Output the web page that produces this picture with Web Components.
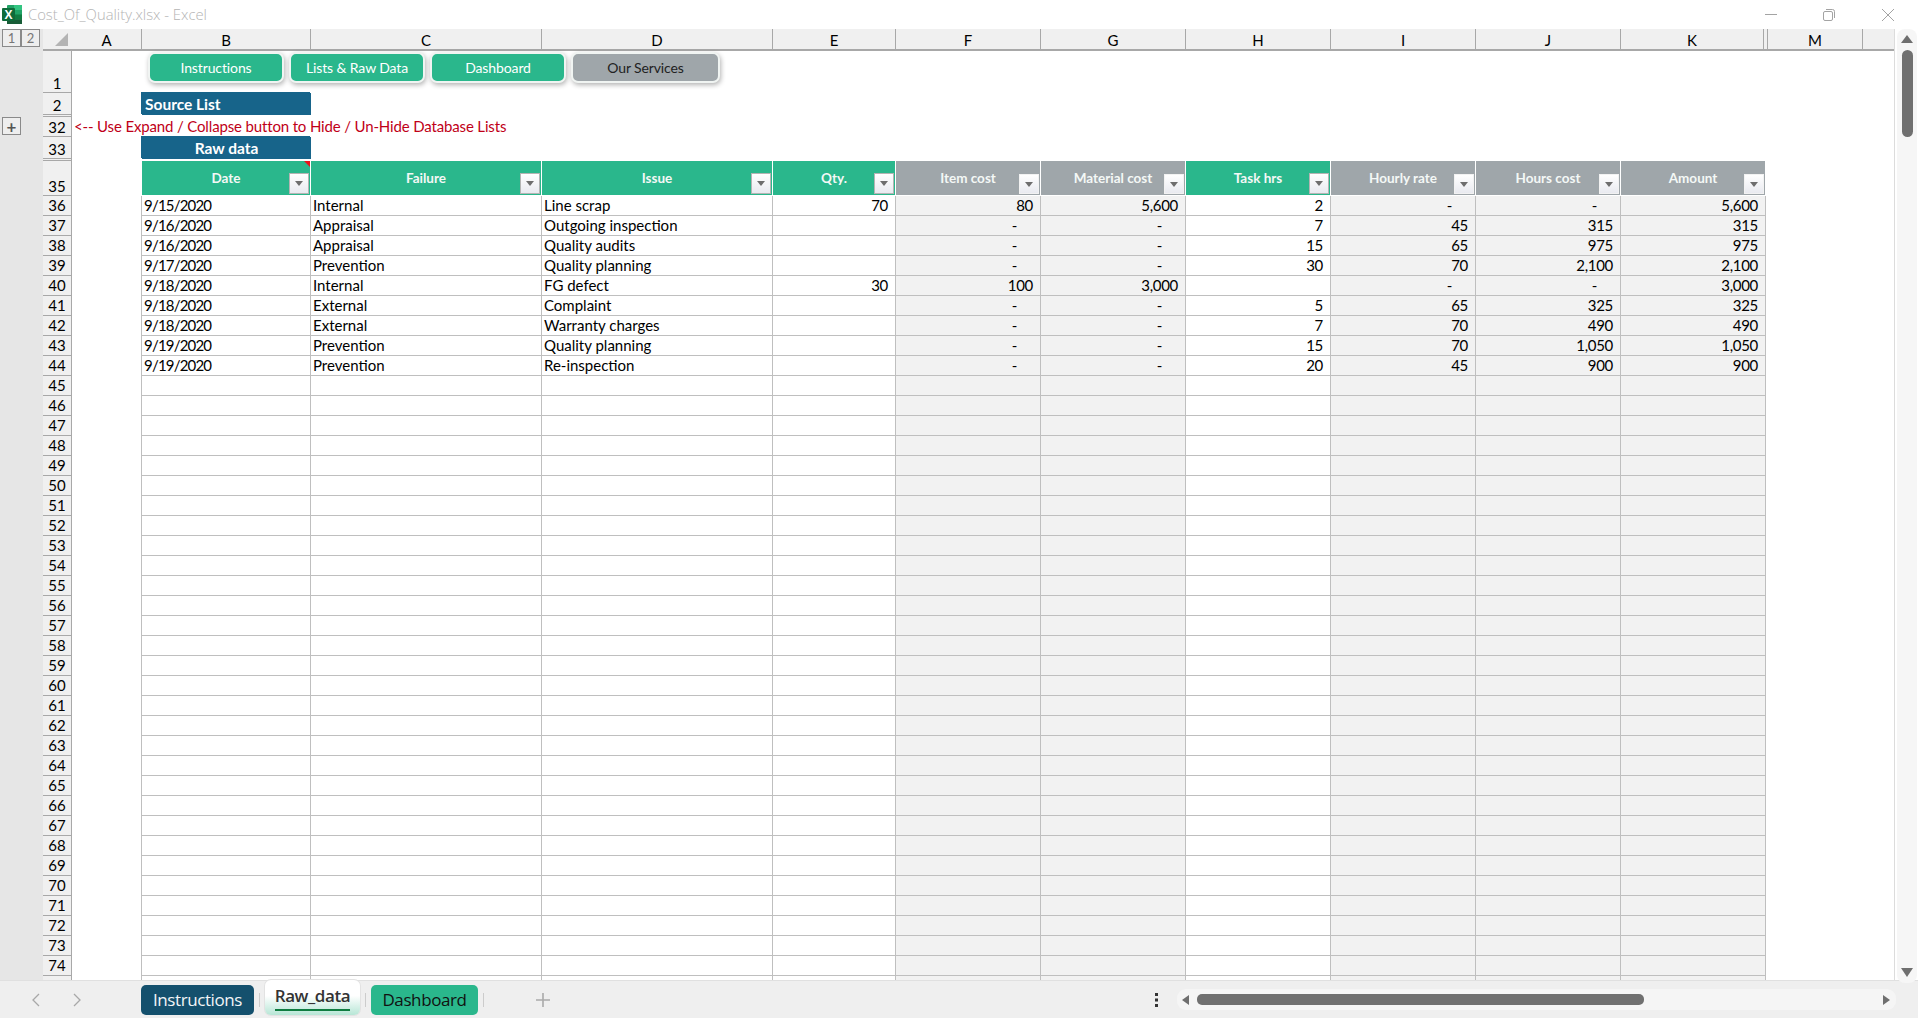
<!DOCTYPE html>
<html lang="en">
<head>
<meta charset="utf-8">
<title>Cost_Of_Quality.xlsx - Excel</title>
<style>
    html, body { margin: 0; height: 100%; overflow: hidden; background: #fff; font-family: Lato, "Liberation Sans", sans-serif; }
</style>
</head>
<body>
<excel-window>
    <excel-titlebar slot="title">Cost_Of_Quality.xlsx - Excel</excel-titlebar>
    <excel-outline slot="outline"></excel-outline>
    <excel-sheet slot="sheet">
        <nav-button>Instructions</nav-button>
        <nav-button>Lists &amp; Raw Data</nav-button>
        <nav-button>Dashboard</nav-button>
        <nav-button tone="grey">Our Services</nav-button>
    </excel-sheet>
    <excel-vscroll slot="vscroll"></excel-vscroll>
    <excel-tabbar slot="tabs">
        <sheet-tab tone="navy">Instructions</sheet-tab>
        <sheet-tab active>Raw_data</sheet-tab>
        <sheet-tab tone="green">Dashboard</sheet-tab>
    </excel-tabbar>
</excel-window>

<script>
// Page frame: title on top, gutter + sheet + scrollbar in the middle, tabs at the bottom
class ExcelWindow extends HTMLElement {
    constructor() {
        super();
        this.attachShadow({ mode: 'open' });
        this.shadowRoot.innerHTML = `
            <style>
                :host { display: flex; flex-direction: column; width: 1918px; height: 1018px; overflow: hidden; }
                .middle { display: flex; height: 951px; }
            </style>
            <slot name="title"></slot>
            <div class="middle">
                <slot name="outline"></slot>
                <slot name="sheet"></slot>
                <slot name="vscroll"></slot>
            </div>
            <slot name="tabs"></slot>
        `;
    }
}

class ExcelTitlebar extends HTMLElement {
    constructor() {
        super();
        this.attachShadow({ mode: 'open' });
        this.shadowRoot.innerHTML = `
            <style>
                :host { display: flex; align-items: center; height: 29px; background: #fff; padding: 0 24px 0 2px; flex: none; }
                .logo { width: 20px; height: 19px; flex: none; margin-top: -1px; }
                .name { margin: -2px 0 0 6px; font: 300 14.8px "Open Sans", sans-serif; color: #b4b4b4; flex: 1; }
                .controls { display: flex; gap: 46px; align-items: center; }
                svg.ctl { width: 12px; height: 12px; display: block; fill: none; stroke: #a3a3a3; stroke-width: 1; }
                svg.restore { margin-right: 1px; }
            </style>
            <svg class="logo" viewBox="0 0 20 19">
                <rect x="5" y="0" width="15" height="19" rx="1" fill="#21a366"/>
                <rect x="12" y="0" width="8" height="5" fill="#33c481"/>
                <rect x="12" y="9.5" width="8" height="5" fill="#107c41"/>
                <rect x="5" y="9.5" width="7" height="9.5" fill="#185c37"/>
                <rect x="12" y="14.5" width="8" height="4.5" fill="#185c37"/>
                <rect x="0" y="3" width="13" height="13" rx="1" fill="#0f6b3a"/>
                <text x="6.5" y="14" text-anchor="middle" font-family="'Liberation Sans'" font-weight="700" font-size="12" fill="#fff">X</text>
            </svg>
            <span class="name"><slot></slot></span>
            <div class="controls">
                <svg class="ctl" viewBox="0 0 12 12"><path d="M0 5.5H12"/></svg>
                <svg class="ctl restore" viewBox="0 0 12 12"><rect x=".5" y="2.5" width="9" height="9" rx="1.5"/><path d="M3 .5H9.5A2 2 0 0 1 11.5 2.5V9"/></svg>
                <svg class="ctl" viewBox="0 0 12 12"><path d="M0 0L12 12M12 0L0 12"/></svg>
            </div>
        `;
    }
}

// Grouping gutter on the far left (level buttons and the + box)
class ExcelOutline extends HTMLElement {
    constructor() {
        super();
        this.attachShadow({ mode: 'open' });
        this.shadowRoot.innerHTML = `
            <style>
                :host { display: block; width: 43px; flex: none; background: #e6e6e6; box-sizing: border-box; padding-left: 2px; }
                .levels { display: flex; }
                .box {
                    box-sizing: border-box; width: 19px; height: 18px; border: 1px solid #8a8a8a; background: #eee;
                    font: 13px Lato, sans-serif; color: #777; display: flex; align-items: center; justify-content: center;
                }
                .plus { margin-top: 70px; color: #555; font-size: 17px; line-height: 1; font-weight: 700; }
            </style>
            <div class="levels"><div class="box">1</div><div class="box">2</div></div>
            <div class="box plus">+</div>
        `;
    }
}

// Shape buttons floating in row 1
class NavButton extends HTMLElement {
    constructor() {
        super();
        this.attachShadow({ mode: 'open' });
        this.shadowRoot.innerHTML = `
            <style>
                :host {
                    display: flex; align-items: center; justify-content: center; box-sizing: border-box;
                    width: 136px; height: 31px; border: 2px solid #f0f4f2; border-radius: 7px; background: #2ab78c;
                    color: #fff; font: 14px Lato, sans-serif; letter-spacing: -.12px; box-shadow: 1px 2px 5px rgba(0,0,0,.3);
                }
                :host([tone="grey"]) { width: 149px; background: #9fa6aa; color: #222; }
            </style>
            <slot></slot>
        `;
    }
}

// Table header cell with the little filter arrow
class FilterHeader extends HTMLElement {
    constructor() {
        super();
        this.attachShadow({ mode: 'open' });
        this.shadowRoot.innerHTML = `
            <style>
                :host {
                    display: flex; position: relative; align-items: flex-start; justify-content: center; box-sizing: border-box;
                    background: #2ab78c; color: #f4f8f6; font: 700 13.5px Lato, sans-serif; padding-top: 9px;
                    border-right: 1px solid #fff; border-bottom: 1px solid #fff;
                }
                :host([tone="grey"]) { background: #9fa6aa; }
                .filter {
                    position: absolute; right: 1px; bottom: 1px; box-sizing: border-box; width: 20px; height: 21px;
                    background: linear-gradient(#fff, #e9eaf0); border: 1px solid #b4b4b4;
                    display: flex; align-items: center; justify-content: center;
                }
                :host([tone="grey"]) .filter { border-color: #f2f2f2; height: 20px; }
                .filter::after { content: ""; border: 4px solid transparent; border-top: 5px solid #6e6e6e; border-bottom: 0; }
                .note { position: absolute; top: 0; right: 0; border-top: 6px solid #e8121a; border-left: 6px solid transparent; display: none; }
                :host([note]) .note { display: block; }
            </style>
            <slot></slot>
            <span class="filter"></span>
            <span class="note"></span>
        `;
    }
}

// The worksheet itself, drawn as one CSS grid
const LETTERS = ['A', 'B', 'C', 'D', 'E', 'F', 'G', 'H', 'I', 'J', 'K', '', 'M'];
const HEADERS = [
    ['Date', ''], ['Failure', ''], ['Issue', ''], ['Qty.', ''], ['Item cost', 'grey'], ['Material cost', 'grey'],
    ['Task hrs', ''], ['Hourly rate', 'grey'], ['Hours cost', 'grey'], ['Amount', 'grey']
];
// date, failure, issue, qty, item, material, hrs, rate, hours cost, amount
const DATA = [
    ['9/15/2020', 'Internal', 'Line scrap', '70', '80', '5,600', '2', '-', '-', '5,600'],
    ['9/16/2020', 'Appraisal', 'Outgoing inspection', '', '-', '-', '7', '45', '315', '315'],
    ['9/16/2020', 'Appraisal', 'Quality audits', '', '-', '-', '15', '65', '975', '975'],
    ['9/17/2020', 'Prevention', 'Quality planning', '', '-', '-', '30', '70', '2,100', '2,100'],
    ['9/18/2020', 'Internal', 'FG defect', '30', '100', '3,000', '', '-', '-', '3,000'],
    ['9/18/2020', 'External', 'Complaint', '', '-', '-', '5', '65', '325', '325'],
    ['9/18/2020', 'External', 'Warranty charges', '', '-', '-', '7', '70', '490', '490'],
    ['9/19/2020', 'Prevention', 'Quality planning', '', '-', '-', '15', '70', '1,050', '1,050'],
    ['9/19/2020', 'Prevention', 'Re-inspection', '', '-', '-', '20', '45', '900', '900']
];
const GREY_COLS = [4, 5, 7, 8, 9];

class ExcelSheet extends HTMLElement {
    constructor() {
        super();
        this.attachShadow({ mode: 'open' });
    }

    connectedCallback() {
        this.render();
    }

    blanks(n) {
        return '<div></div>'.repeat(n);
    }

    dataCell(value, i) {
        if (i === 0) return `<div class="cell txt date">${value}</div>`;
        if (i < 3) return `<div class="cell txt">${value}</div>`;
        const grey = GREY_COLS.includes(i) ? ' grey' : '';
        const dash = value === '-' ? ' dash' : '';
        return `<div class="cell num${grey}${dash}">${value}</div>`;
    }

    render() {
        let rows = '';
        for (let r = 36; r <= 75; r++) {
            const row = DATA[r - 36] || Array(10).fill('');
            // only a sliver of row 75 shows above the tab bar, its number stays out of view
            rows += `<div class="rh body">${r < 75 ? r : ''}</div><div class="a"></div>`;
            rows += row.map((v, i) => this.dataCell(v, i)).join('');
            rows += this.blanks(3);
        }
        const heads = HEADERS.map(([t, tone], i) =>
            `<filter-header ${tone ? 'tone="grey"' : ''} ${i === 0 ? 'note' : ''}>${t}</filter-header>`).join('');

        this.shadowRoot.innerHTML = `
            <style>
                :host { display: block; flex: 1; min-width: 0; height: 951px; overflow: hidden; background: #fff; border-right: 1px solid #dcdcdc; box-sizing: border-box; color: #000; }
                .grid {
                    display: grid;
                    grid-template-columns: 29px 70px 169px 231px 231px 123px 145px 145px 145px 145px 145px 145px 2px 95px 31px;
                    grid-template-rows: 22px 42px 22px 2px 20px 22px 2px 35px repeat(40, 20px);
                    font: 15px Lato, sans-serif;
                }
                .corner { background: #f0f0f0; border-bottom: 2px solid #a8a8a8; box-sizing: border-box; display: flex; }
                .corner svg { width: 29px; height: 20px; }
                .ch {
                    background: #f0f0f0; border-right: 1px solid #a8a8a8; border-bottom: 2px solid #a8a8a8; box-sizing: border-box;
                    text-align: center; line-height: 22px; overflow: hidden;
                }
                .ch.k { margin-right: 2px; }
                .ch.l { margin-left: -2px; }
                .ch.last { border-right: 0; }
                .rh {
                    background: #f0f0f0; border-right: 1px solid #a8a8a8; border-bottom: 1px solid #a8a8a8; box-sizing: border-box;
                    display: flex; align-items: flex-end; justify-content: center; line-height: 18px;
                }
                .rh.body { line-height: 19px; }
                .band { background: #f0f0f0; border-bottom: 1px solid #a8a8a8; border-right: 1px solid #a8a8a8; box-sizing: border-box; }
                .buttons { grid-column: 3 / -1; display: flex; gap: 5px; padding: 1px 0 0 6px; }
                .banner { background: #17648a; color: #fff; font-weight: 700; font-size: 15.5px; box-shadow: -1px -1px 0 #17648a; display: flex; align-items: center; padding-left: 3px; }
                .banner.center { justify-content: center; padding-left: 0; }
                .hint { grid-column: 2 / span 4; color: #c00018; white-space: nowrap; padding-left: 2px; line-height: 19px; letter-spacing: -.15px; }
                .a { border-right: 1px solid #bfbfbf; }
                .cell { border-right: 1px solid #bfbfbf; border-bottom: 1px solid #bfbfbf; box-sizing: border-box; line-height: 19px; white-space: nowrap; overflow: hidden; }
                .txt { padding-left: 2px; }
                .date { letter-spacing: -.8px; }
                .num { text-align: right; padding-right: 7px; letter-spacing: -.3px; }
                .grey { background: #f2f2f2; }
                .dash { padding-right: 23px; }
            </style>
            <div class="grid">
                <div class="corner"><svg viewBox="0 0 29 20"><path d="M12 17L25 4V17Z" fill="#b4b4b4"/></svg></div>
                ${LETTERS.map((l, i) => `<div class="ch${i === 10 ? ' k' : ''}${i === 11 ? ' l' : ''}">${l}</div>`).join('')}
                <div class="ch last"></div>

                <div class="rh">1</div><div></div>
                <div class="buttons"><slot></slot></div>

                <div class="rh">2</div><div></div><div class="banner">Source List</div>${this.blanks(12)}
                <div class="band"></div>${this.blanks(14)}
                <div class="rh">32</div><div class="hint">&lt;-- Use Expand / Collapse button to Hide / Un-Hide Database Lists</div>${this.blanks(10)}
                <div class="rh">33</div><div></div><div class="banner center">Raw data</div>${this.blanks(12)}
                <div class="band"></div>${this.blanks(14)}
                <div class="rh">35</div><div></div>${heads}${this.blanks(3)}
                ${rows}
            </div>
        `;
    }
}

// Right scrollbar, its rounded track pokes a little into the tab bar
class ExcelVscroll extends HTMLElement {
    constructor() {
        super();
        this.attachShadow({ mode: 'open' });
        this.shadowRoot.innerHTML = `
            <style>
                :host {
                    display: flex; flex-direction: column; align-items: center; width: 20px; height: 954px; margin: 0 1px 0 2px; flex: none;
                    position: relative; z-index: 1; background: #f6f6f6; border-radius: 8px; box-sizing: border-box; padding-top: 6px;
                }
                .up, .down { width: 0; height: 0; border: 6px solid transparent; }
                .up { border-bottom: 8px solid #6f6f6f; border-top: 0; }
                .thumb { width: 11px; height: 87px; margin-top: 7px; border-radius: 6px; background: #707070; }
                .down { border-top: 9px solid #6f6f6f; border-bottom: 0; margin-top: auto; margin-bottom: 6px; }
            </style>
            <div class="up"></div>
            <div class="thumb"></div>
            <div class="down"></div>
        `;
    }
}

class SheetTab extends HTMLElement {
    constructor() {
        super();
        this.attachShadow({ mode: 'open' });
        this.shadowRoot.innerHTML = `
            <style>
                :host {
                    display: flex; align-items: center; justify-content: center; box-sizing: border-box; height: 30px;
                    border-radius: 5px; font: 17px "Open Sans", sans-serif; letter-spacing: -.4px; flex: none; position: relative;
                }
                :host([tone="navy"]) { background: #14506d; color: #f2f5f7; width: 113px; }
                :host([tone="green"]) { background: #2ab78c; color: #111; width: 107px; }
                :host([active]) {
                    height: 35px; width: 95px; margin-top: -5px; padding-bottom: 4px; color: #333; font-weight: 600;
                    background: linear-gradient(#fff 45%, #b7e6d6); border-radius: 6px; box-shadow: 0 0 0 1px #e2e2e2;
                }
                .line { display: none; position: absolute; left: 10px; right: 10px; bottom: 4px; height: 2px; background: #107c41; }
                :host([active]) .line { display: block; }
            </style>
            <slot></slot>
            <span class="line"></span>
        `;
    }
}

class ExcelTabbar extends HTMLElement {
    constructor() {
        super();
        this.attachShadow({ mode: 'open' });
        this.shadowRoot.innerHTML = `
            <style>
                :host { display: flex; align-items: center; height: 38px; flex: none; background: #efefef; border-top: 1px solid #e0e0e0; box-sizing: border-box; position: relative; }
                .nav { display: flex; gap: 33px; width: 141px; box-sizing: border-box; padding-left: 32px; }
                .nav svg { width: 8px; height: 14px; fill: none; stroke: #a8a8a8; stroke-width: 1.3; }
                .tabs { display: flex; align-items: center; gap: 5px; }
                .sep { width: 1px; height: 14px; background: #ccc; }
                .plus { width: 14px; height: 14px; margin-left: 52px; fill: none; stroke: #aaa; stroke-width: 1.6; }
                /* the scroll controls sit at the far right of the same bar */
                .right { display: flex; align-items: center; gap: 19px; margin-left: auto; margin-right: 22px; }
                .dots { width: 3px; height: 14px; fill: #333; }
                .hbar {
                    width: 719px; height: 21px; border-radius: 9px; background: #f5f5f5;
                    display: flex; align-items: center; padding: 0 6px 0 5px; box-sizing: border-box;
                }
                .hbar .l { width: 0; height: 0; border: 5px solid transparent; border-right: 7px solid #6f6f6f; border-left: 0; }
                .hbar .thumb { width: 447px; height: 11px; margin-left: 8px; border-radius: 5px; background: #707070; }
                .hbar .r { width: 0; height: 0; border: 5px solid transparent; border-left: 7px solid #6f6f6f; border-right: 0; margin-left: auto; }
            </style>
            <div class="nav">
                <svg viewBox="0 0 8 14"><path d="M7 1L1 7L7 13"/></svg>
                <svg viewBox="0 0 8 14"><path d="M1 1L7 7L1 13"/></svg>
            </div>
            <div class="tabs" id="tabs"></div>
            <svg class="plus" viewBox="0 0 14 14"><path d="M7 0V14M0 7H14"/></svg>
            <div class="right">
                <svg class="dots" viewBox="0 0 3 14"><rect width="3" height="3"/><rect y="5.5" width="3" height="3"/><rect y="11" width="3" height="3"/></svg>
                <div class="hbar"><span class="l"></span><span class="thumb"></span><span class="r"></span></div>
            </div>
        `;
        // one slot per tab, with a thin separator after each
        const tabs = this.shadowRoot.getElementById('tabs');
        [...this.children].forEach((tab, i) => {
            tab.slot = 't' + i;
            tabs.insertAdjacentHTML('beforeend', `<slot name="t${i}"></slot><span class="sep"></span>`);
        });
    }
}

customElements.define('excel-titlebar', ExcelTitlebar);
customElements.define('excel-outline', ExcelOutline);
customElements.define('nav-button', NavButton);
customElements.define('filter-header', FilterHeader);
customElements.define('excel-sheet', ExcelSheet);
customElements.define('excel-vscroll', ExcelVscroll);
customElements.define('sheet-tab', SheetTab);
customElements.define('excel-tabbar', ExcelTabbar);
customElements.define('excel-window', ExcelWindow);
</script>
</body>
</html>
